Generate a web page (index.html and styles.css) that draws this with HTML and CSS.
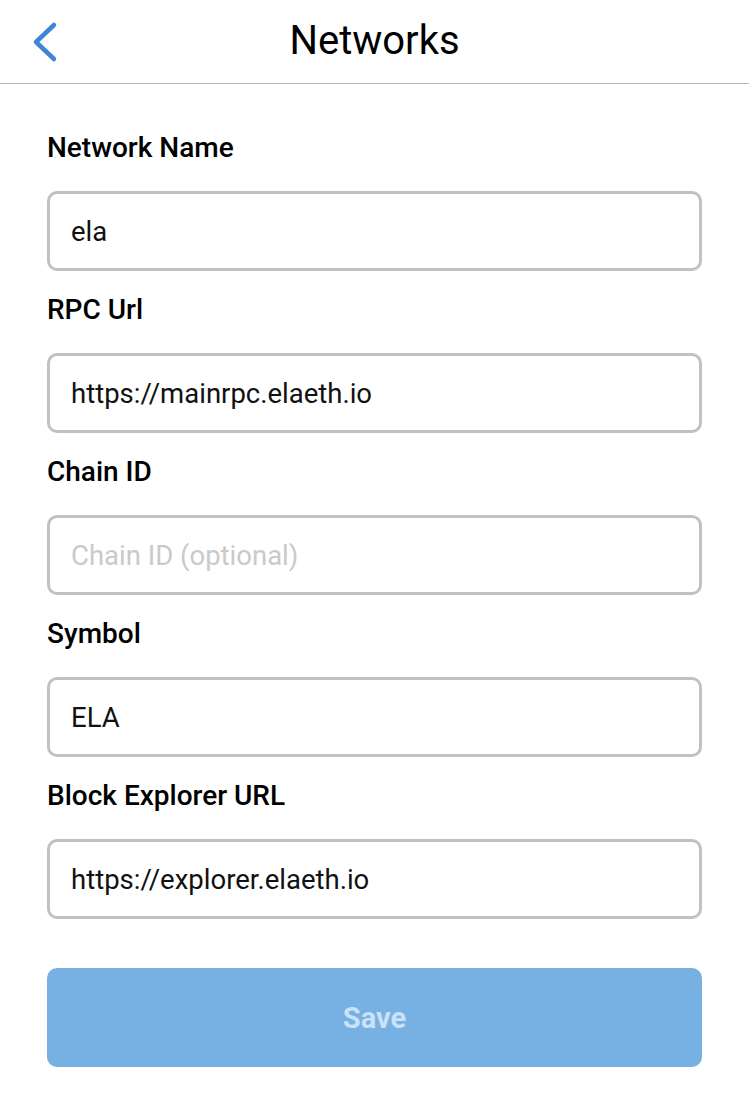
FILE: index.html
```html
<!DOCTYPE html>
<html>
<head>
<meta charset="utf-8">
<link rel="stylesheet" href="styles.css">
</head>
<body>
<div class="header">
  <button class="back" aria-label="Back">
    <svg width="30" height="42" viewBox="0 0 30 42"><path d="M24 4 L6 21 L24 38" fill="none" stroke="#3d85d6" stroke-width="4.5" stroke-linecap="round" stroke-linejoin="round"/></svg>
  </button>
  <div class="title">Networks</div>
</div>
<form class="form">
  <div class="field">
    <label class="label">Network Name</label>
    <div class="input">ela</div>
  </div>
  <div class="field">
    <label class="label">RPC Url</label>
    <div class="input">https://mainrpc.elaeth.io</div>
  </div>
  <div class="field">
    <label class="label">Chain ID</label>
    <div class="input placeholder">Chain ID (optional)</div>
  </div>
  <div class="field">
    <label class="label">Symbol</label>
    <div class="input">ELA</div>
  </div>
  <div class="field">
    <label class="label">Block Explorer URL</label>
    <div class="input">https://explorer.elaeth.io</div>
  </div>
  <div class="save">Save</div>
</form>
</body>
</html>
```
FILE: styles.css
```css
html, body {
  margin: 0;
  padding: 0;
  background: #ffffff;
  font-family: Roboto, "Liberation Sans", sans-serif;
  color: #000;
}
.header {
  position: relative;
  height: 83px;
  border-bottom: 1px solid #b8b8b8;
  display: flex;
  align-items: center;
  justify-content: center;
}
.back {
  position: absolute;
  left: 30px;
  top: 21px;
  border: none;
  background: none;
  padding: 0;
  width: 30px;
  height: 42px;
}
.title {
  font-size: 40px;
  font-weight: 400;
  margin-top: -2px;
}
.form {
  padding: 49px 47px 0 47px;
  display: flex;
  flex-direction: column;
}
.field {
  display: flex;
  flex-direction: column;
  margin-bottom: 24px;
}
.label {
  font-size: 28px;
  font-weight: 500;
  line-height: 30px;
  height: 30px;
  margin-bottom: 28px;
}
.input {
  box-sizing: border-box;
  height: 80px;
  border: 3px solid #bec2c6;
  border-radius: 10px;
  padding: 0 21px;
  display: flex;
  align-items: center;
  font-size: 27.5px;
  color: #111;
}
.input.placeholder {
  color: #c8cacc;
}
.save {
  margin-top: 25px;
  height: 99px;
  border-radius: 10px;
  background: #77b0e2;
  color: #c7e2f9;
  font-size: 29px;
  font-weight: 700;
  display: flex;
  align-items: center;
  justify-content: center;
}
```
